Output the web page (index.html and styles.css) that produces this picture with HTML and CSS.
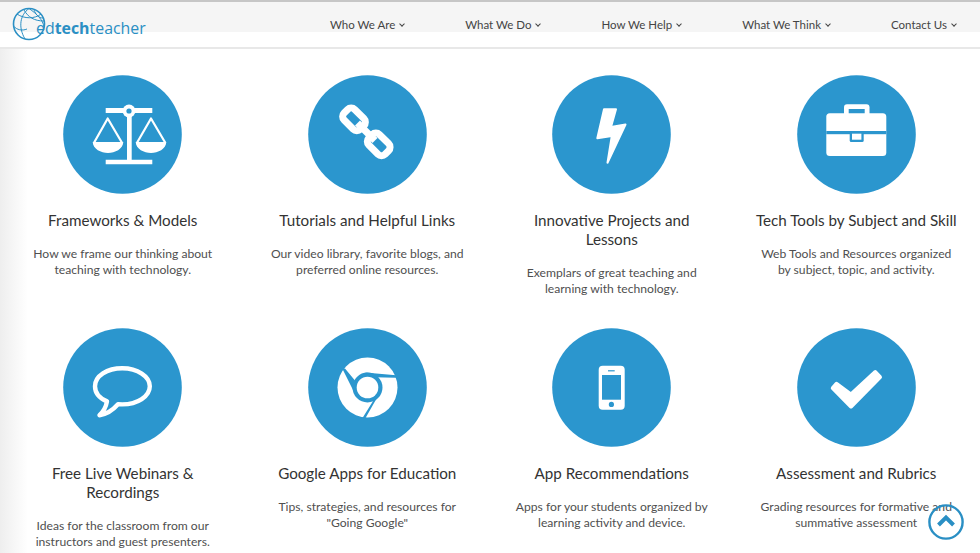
FILE: index.html
```html
<!DOCTYPE html>
<html lang="en">
<head>
  <meta charset="UTF-8">
  <title>EdTechTeacher</title>
  <link rel="stylesheet" href="styles.css">
</head>
<body>
  <header class="topbar">
    <a class="logo">
      <svg class="globe" viewBox="0 0 34 34" width="34" height="34">
        <circle cx="17" cy="17" r="15.5" fill="none" stroke="#2a8fc4" stroke-width="1.6"/>
        <path d="M17 1.5C8 8 6 20 13 32M17 1.5C25 7 31 13 32 20M5 7C12 12 23 12 29 7M1.5 19C5 23 10 24 15 22M12 3C16 10 22 14 32 14M22 3C24 8 27 11 31 11" fill="none" stroke="#2a8fc4" stroke-width="1"/>
      </svg>
      <span class="logo-text">ed<b>tech</b>teacher</span>
    </a>
    <nav class="menu">
      <a>Who We Are <i class="caret"></i></a>
      <a>What We Do <i class="caret"></i></a>
      <a>How We Help <i class="caret"></i></a>
      <a>What We Think <i class="caret"></i></a>
      <a>Contact Us <i class="caret"></i></a>
    </nav>
  </header>

  <main class="cards">
    <section class="card">
      <svg class="badge" viewBox="0 0 119 119">
        <circle class="disc" cx="59.5" cy="59.5" r="59.3"/>
        <path class="ink" d="M42.7 33H89.3V38H42.7ZM64 36H68.7V86H64ZM42.7 84.7H89.3V89.3H42.7Z"/>
        <circle class="ink" cx="66" cy="36" r="6.5"/>
        <circle class="disc" cx="66" cy="36" r="2.6"/>
        <path class="line" d="M31 67.7L44.7 43.5L59 67.7M74 67.7L88 43.5L102.3 67.7"/>
        <path class="ink" d="M29.7 67H60.3C60 74 52 78 45 78C38 78 30 74 29.7 67ZM72.7 67H103.3C103 74 95 78 88 78C81 78 73 74 72.7 67Z"/>
      </svg>
      <h2>Frameworks &amp; Models</h2>
      <p>How we frame our thinking about<br>teaching with technology.</p>
    </section>
    <section class="card">
      <svg class="badge" viewBox="0 0 119 119">
        <circle class="disc" cx="59.5" cy="59.5" r="59.3"/>
        <rect class="thick" x="34.5" y="36.8" width="23" height="15" rx="5" transform="rotate(45 46 44.3)"/>
        <rect class="thick" x="59.2" y="61.8" width="23" height="15" rx="5" transform="rotate(45 70.7 69.3)"/>
        <path class="thick" d="M49.5 48L67 65.5"/>
      </svg>
      <h2>Tutorials and Helpful Links</h2>
      <p>Our video library, favorite blogs, and<br>preferred online resources.</p>
    </section>
    <section class="card">
      <svg class="badge" viewBox="0 0 119 119">
        <circle class="disc" cx="59.5" cy="59.5" r="59.3"/>
        <path class="ink bolt" d="M52 34.3H64L59 52L73.5 49.5L55.5 87.7L59.8 61L45.3 63.2Z"/>
      </svg>
      <h2>Innovative Projects and<br>Lessons</h2>
      <p>Exemplars of great teaching and<br>learning with technology.</p>
    </section>
    <section class="card">
      <svg class="badge" viewBox="0 0 119 119">
        <circle class="disc" cx="59.5" cy="59.5" r="59.3"/>
        <rect class="ink" x="47" y="29.3" width="25.5" height="14" rx="3"/>
        <rect class="disc" x="51.7" y="34" width="16" height="6"/>
        <rect class="ink" x="29.3" y="38.3" width="60" height="42.7" rx="3.5"/>
        <rect class="disc" x="29.3" y="56" width="60" height="3.2"/>
        <rect class="disc" x="52.7" y="57" width="14" height="10" rx="1.5"/>
        <rect class="ink" x="55" y="58.7" width="9.4" height="6"/>
      </svg>
      <h2>Tech Tools by Subject and Skill</h2>
      <p>Web Tools and Resources organized<br>by subject, topic, and activity.</p>
    </section>
    <section class="card">
      <svg class="badge" viewBox="0 0 119 119">
        <circle class="disc" cx="59.5" cy="59.5" r="59.3"/>
        <path class="chat" d="M59.3 40.3C44 40.3 32 48 32 58.3C32 65 37 70.5 44 73.4C43 79 40 84 36.5 87.2C43.5 86.2 50 82 55 76.3C56.4 76.4 57.9 76.4 59.3 76.4C74.5 76.4 86.8 68.3 86.8 58.3C86.8 48.4 74.5 40.3 59.3 40.3Z"/>
      </svg>
      <h2>Free Live Webinars &amp;<br>Recordings</h2>
      <p>Ideas for the classroom from our<br>instructors and guest presenters.</p>
    </section>
    <section class="card">
      <svg class="badge" viewBox="0 0 119 119">
        <circle class="disc" cx="59.5" cy="59.5" r="59.3"/>
        <circle class="ink" cx="59.5" cy="59.5" r="30"/>
        <circle class="disc" cx="59.5" cy="59.5" r="15"/>
        <circle class="ink" cx="59.5" cy="59.5" r="10.8"/>
        <path class="disc" d="M57 44.5L88 47.2V49.8L66 49.2ZM34.5 41L37 40.5L49 55L46 64ZM54.5 90L57.5 90L74 61L66 71.5Z"/>
      </svg>
      <h2>Google Apps for Education</h2>
      <p>Tips, strategies, and resources for<br>"Going Google"</p>
    </section>
    <section class="card">
      <svg class="badge" viewBox="0 0 119 119">
        <circle class="disc" cx="59.5" cy="59.5" r="59.3"/>
        <rect class="ink" x="46.7" y="37.7" width="26" height="44" rx="4"/>
        <rect class="disc" x="50" y="47" width="19" height="24.7"/>
        <rect class="disc" x="56" y="42.2" width="6.7" height="1.2"/>
        <circle class="disc" cx="59.4" cy="76.4" r="2.6"/>
      </svg>
      <h2>App Recommendations</h2>
      <p>Apps for your students organized by<br>learning activity and device.</p>
    </section>
    <section class="card">
      <svg class="badge" viewBox="0 0 119 119">
        <circle class="disc" cx="59.5" cy="59.5" r="59.3"/>
        <path class="ink check" d="M35.8 60L39.5 55.8L54 66.5L78.3 44L83 49L54 78.5Z"/>
      </svg>
      <h2>Assessment and Rubrics</h2>
      <p>Grading resources for formative and<br>summative assessment</p>
    </section>
  </main>

  <a class="to-top">
    <svg viewBox="0 0 36 36" width="36" height="36">
      <circle cx="18" cy="18" r="16.6" fill="none" stroke="#2a8fc4" stroke-width="2.4"/>
      <path d="M10.5 21L18 13.5L25.5 21" fill="none" stroke="#2a8fc4" stroke-width="4"/>
    </svg>
  </a>
</body>
</html>
```

FILE: styles.css
```css
html, body {
  height: 100%;
  overflow: hidden;
}
body {
  margin: 0;
  font-family: "Lato", "Noto Sans", sans-serif;
  color: #333;
  background: linear-gradient(to right, #eee, #fff 28px);
}
.topbar {
  height: 45px;
  display: flex;
  border-top: 2px solid #c6c6c6;
  border-bottom: 2px solid #e8e8e8;
  background: linear-gradient(to bottom, #f5f5f5 30px, #fff 30px);
}
.logo {
  display: flex;
  align-items: flex-start;
  padding: 5px 0 0 12px;
  width: 315px;
  box-sizing: border-box;
}
.globe {
  margin-right: -10px;
  flex: none;
}
.logo-text {
  margin-top: 10px;
  font-family: "Open Sans", sans-serif;
  font-size: 15.9px;
  line-height: 22px;
  color: #2a8fc4;
}
.logo-text b {
  font-weight: 700;
}
.menu {
  display: flex;
  gap: 59px;
  padding: 0 0 0 15px;
  white-space: nowrap;
  font-size: 11.5px;
  line-height: 46px;
  color: #444;
}
.caret {
  display: inline-block;
  width: 3px;
  height: 3px;
  margin: 0 2px 3px 2px;
  border-right: 1px solid #444;
  border-bottom: 1px solid #444;
  transform: rotate(45deg);
}
.cards {
  display: grid;
  grid-template-columns: repeat(4, 244.5px);
  grid-template-rows: 253px auto;
  padding: 26px 0 0 0.5px;
}
.card {
  text-align: center;
}
.badge {
  display: block;
  width: 119px;
  height: 119px;
  margin: 0 auto 17px;
}
.disc {
  fill: #2b96ce;
}
.ink {
  fill: #fff;
}
.line {
  fill: none;
  stroke: #fff;
  stroke-width: 2.2;
  stroke-linejoin: round;
}
.thick {
  fill: none;
  stroke: #fff;
  stroke-width: 7;
}
.bolt {
  stroke: #fff;
  stroke-width: 2;
  stroke-linejoin: round;
}
.check {
  stroke: #fff;
  stroke-width: 4;
  stroke-linejoin: round;
}
.chat {
  fill: none;
  stroke: #fff;
  stroke-width: 4.4;
  stroke-linejoin: round;
}
.card h2 {
  margin: 0 0 16px;
  font-size: 15.2px;
  font-weight: 400;
  line-height: 19px;
  color: #333;
}
.card p {
  margin: 0;
  font-size: 12.15px;
  line-height: 16px;
  color: #4f4f4f;
}
.to-top {
  position: fixed;
  left: 928px;
  top: 504px;
  width: 36px;
  height: 36px;
}
```
